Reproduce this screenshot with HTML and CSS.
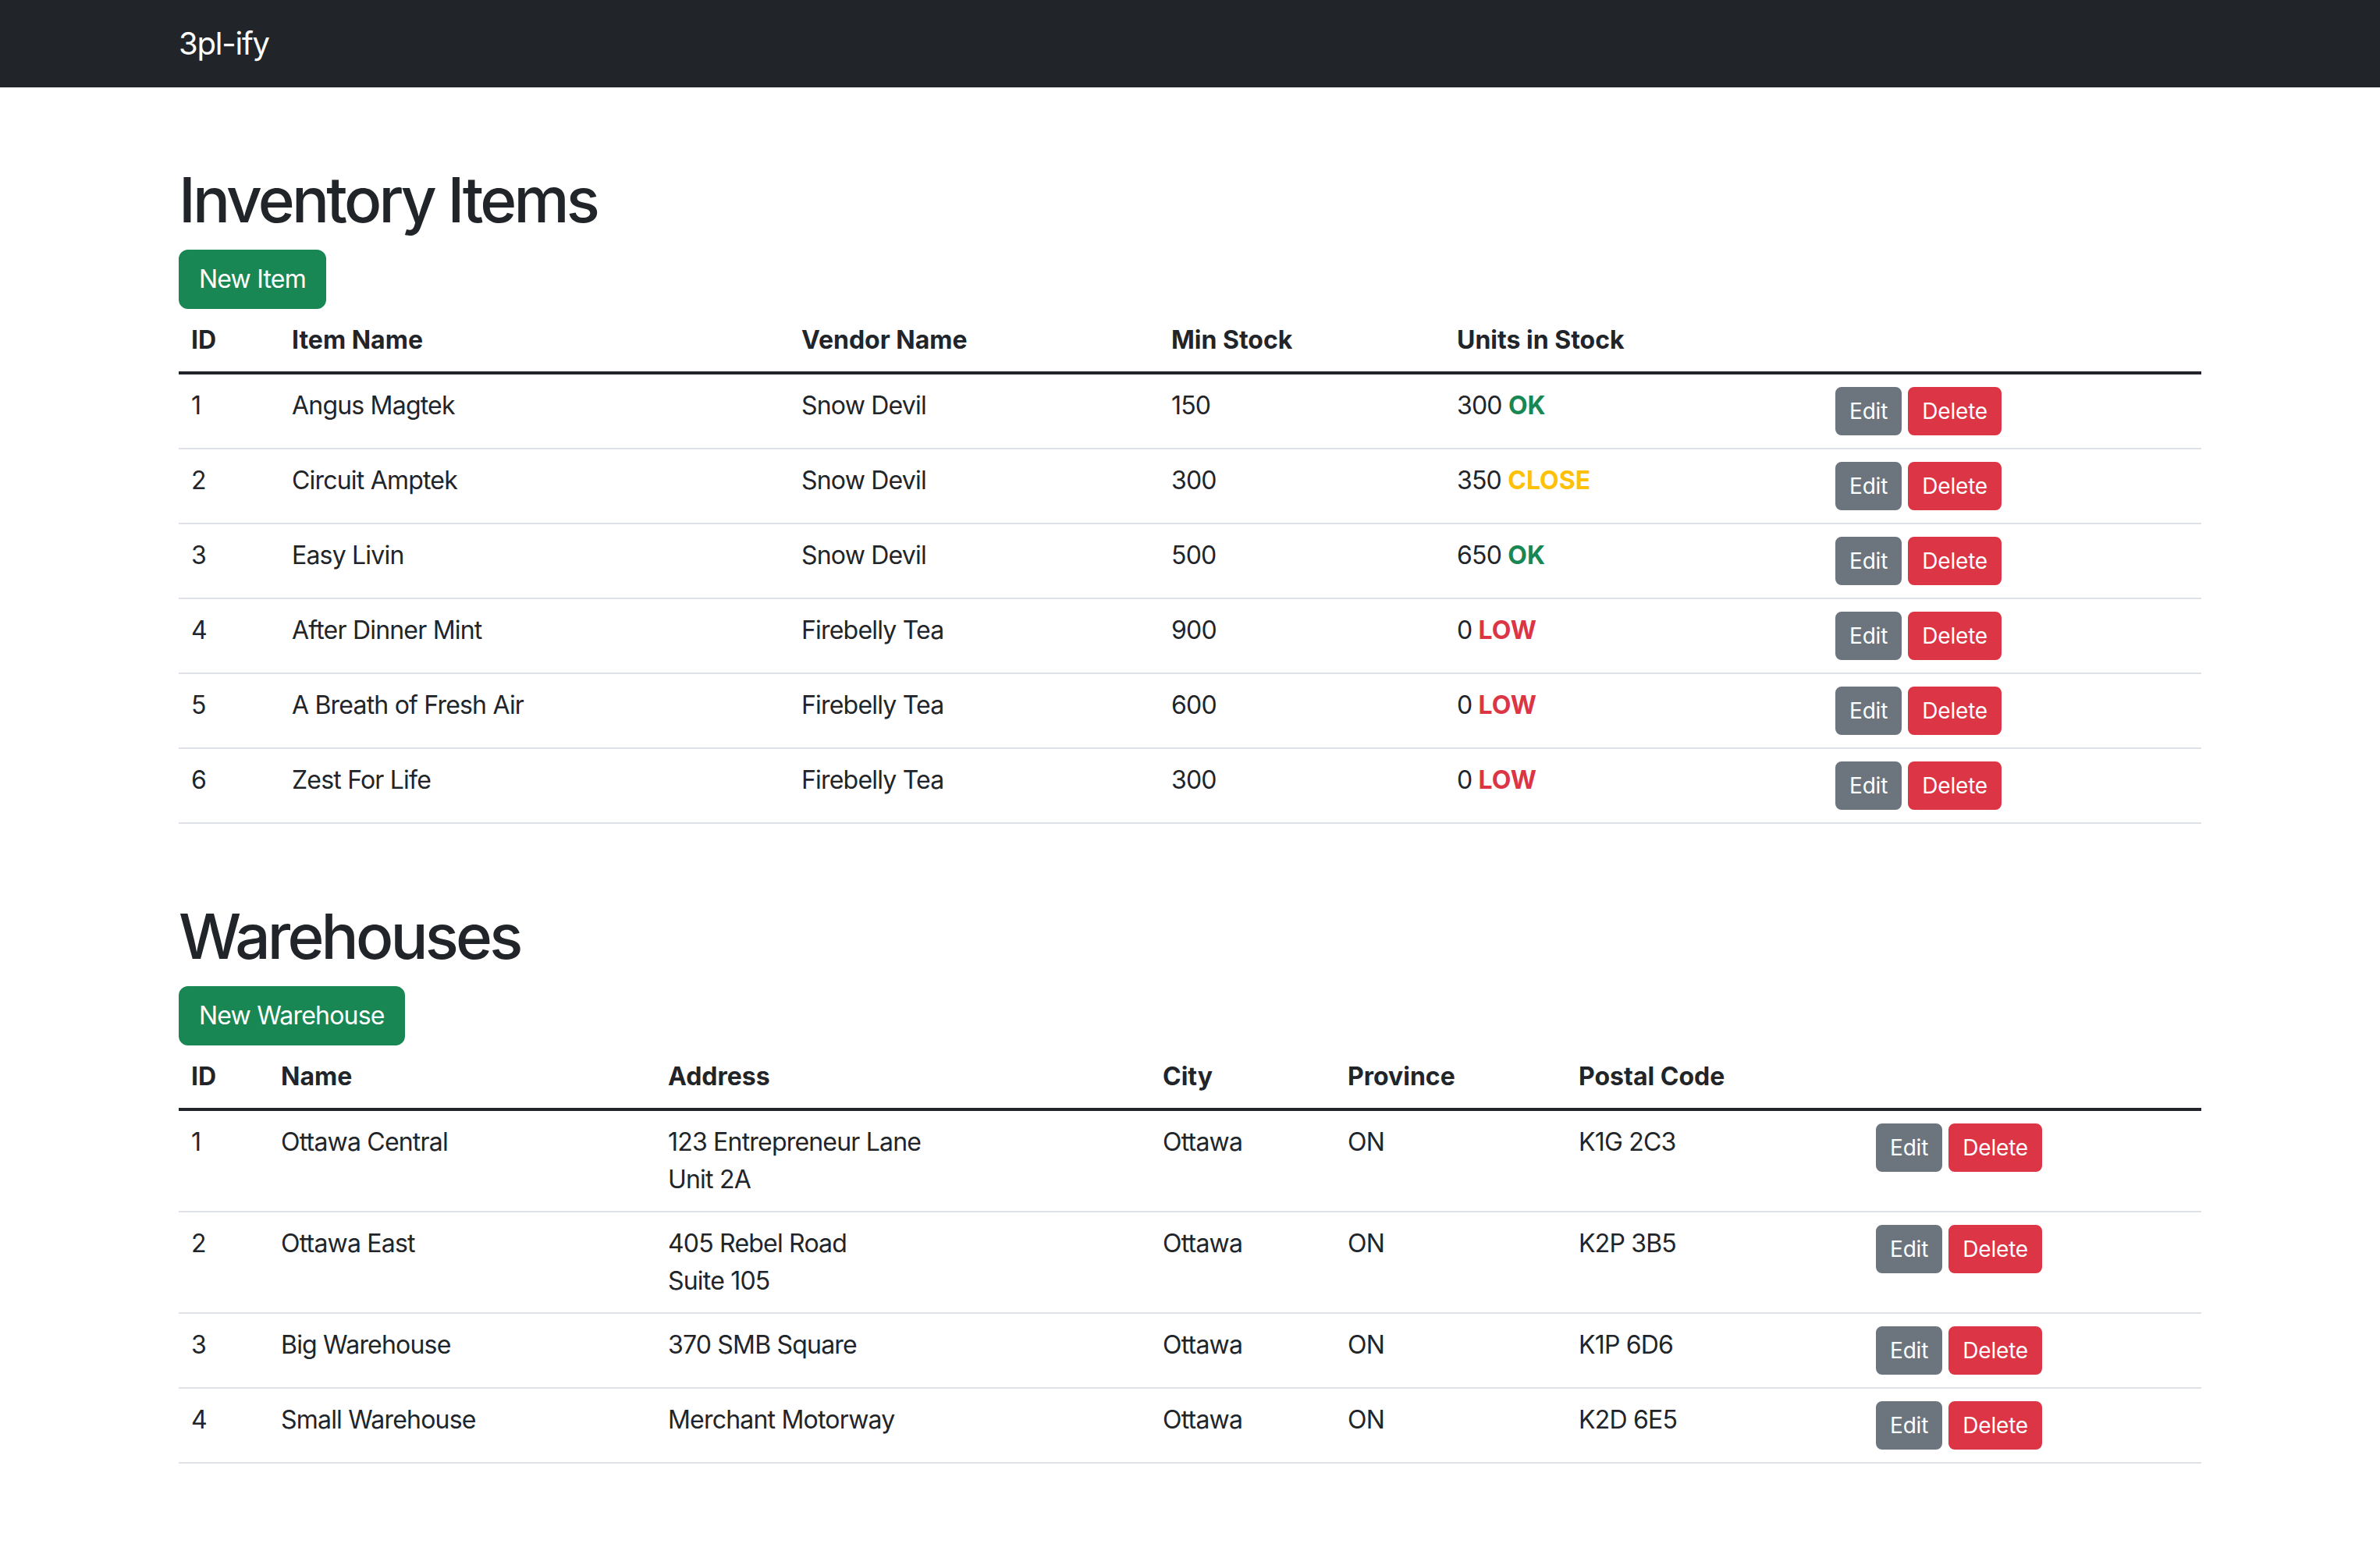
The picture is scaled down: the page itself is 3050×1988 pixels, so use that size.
FILE: index.html
```html
<!DOCTYPE html>
<html lang="en">
<head>
<meta charset="utf-8">
<title>3pl-ify</title>
<link rel="stylesheet" href="styles.css">
</head>
<body>
<nav class="navbar">
  <div class="container">
    <a class="brand" href="#">3pl-ify</a>
  </div>
</nav>
<main class="container">
  <section class="section">
    <h1 class="title">Inventory Items</h1>
    <a class="btn btn-success" href="#">New Item</a>
    <table class="table inv">
      <thead>
        <tr>
          <th class="i-id">ID</th>
          <th class="i-name">Item Name</th>
          <th class="i-vendor">Vendor Name</th>
          <th class="i-min">Min Stock</th>
          <th class="i-units">Units in Stock</th>
          <th class="i-act"></th>
        </tr>
      </thead>
      <tbody>
        <tr><td>1</td><td>Angus Magtek</td><td>Snow Devil</td><td>150</td><td>300 <span class="st ok">OK</span></td><td><a class="btn btn-sm btn-secondary" href="#">Edit</a> <a class="btn btn-sm btn-danger" href="#">Delete</a></td></tr>
        <tr><td>2</td><td>Circuit Amptek</td><td>Snow Devil</td><td>300</td><td>350 <span class="st close">CLOSE</span></td><td><a class="btn btn-sm btn-secondary" href="#">Edit</a> <a class="btn btn-sm btn-danger" href="#">Delete</a></td></tr>
        <tr><td>3</td><td>Easy Livin</td><td>Snow Devil</td><td>500</td><td>650 <span class="st ok">OK</span></td><td><a class="btn btn-sm btn-secondary" href="#">Edit</a> <a class="btn btn-sm btn-danger" href="#">Delete</a></td></tr>
        <tr><td>4</td><td>After Dinner Mint</td><td>Firebelly Tea</td><td>900</td><td>0 <span class="st low">LOW</span></td><td><a class="btn btn-sm btn-secondary" href="#">Edit</a> <a class="btn btn-sm btn-danger" href="#">Delete</a></td></tr>
        <tr><td>5</td><td>A Breath of Fresh Air</td><td>Firebelly Tea</td><td>600</td><td>0 <span class="st low">LOW</span></td><td><a class="btn btn-sm btn-secondary" href="#">Edit</a> <a class="btn btn-sm btn-danger" href="#">Delete</a></td></tr>
        <tr><td>6</td><td>Zest For Life</td><td>Firebelly Tea</td><td>300</td><td>0 <span class="st low">LOW</span></td><td><a class="btn btn-sm btn-secondary" href="#">Edit</a> <a class="btn btn-sm btn-danger" href="#">Delete</a></td></tr>
      </tbody>
    </table>
  </section>
  <section class="section">
    <h1 class="title">Warehouses</h1>
    <a class="btn btn-success" href="#">New Warehouse</a>
    <table class="table wh">
      <thead>
        <tr>
          <th class="w-id">ID</th>
          <th class="w-name">Name</th>
          <th class="w-addr">Address</th>
          <th class="w-city">City</th>
          <th class="w-prov">Province</th>
          <th class="w-postal">Postal Code</th>
          <th class="w-act"></th>
        </tr>
      </thead>
      <tbody>
        <tr><td>1</td><td>Ottawa Central</td><td>123 Entrepreneur Lane<br>Unit 2A</td><td>Ottawa</td><td>ON</td><td>K1G 2C3</td><td><a class="btn btn-sm btn-secondary" href="#">Edit</a> <a class="btn btn-sm btn-danger" href="#">Delete</a></td></tr>
        <tr><td>2</td><td>Ottawa East</td><td>405 Rebel Road<br>Suite 105</td><td>Ottawa</td><td>ON</td><td>K2P 3B5</td><td><a class="btn btn-sm btn-secondary" href="#">Edit</a> <a class="btn btn-sm btn-danger" href="#">Delete</a></td></tr>
        <tr><td>3</td><td>Big Warehouse</td><td>370 SMB Square</td><td>Ottawa</td><td>ON</td><td>K1P 6D6</td><td><a class="btn btn-sm btn-secondary" href="#">Edit</a> <a class="btn btn-sm btn-danger" href="#">Delete</a></td></tr>
        <tr><td>4</td><td>Small Warehouse</td><td>Merchant Motorway</td><td>Ottawa</td><td>ON</td><td>K2D 6E5</td><td><a class="btn btn-sm btn-secondary" href="#">Edit</a> <a class="btn btn-sm btn-danger" href="#">Delete</a></td></tr>
      </tbody>
    </table>
  </section>
</main>
</body>
</html>
```

FILE: styles.css
```css
*, *::before, *::after { box-sizing: border-box; }

html, body {
  margin: 0;
  padding: 0;
  background: #fff;
}

body {
  font-family: Inter, "Noto Sans", "Liberation Sans", sans-serif;
  font-size: 32px;
  line-height: 48px;
  color: #212529;
}

.container {
  max-width: 2640px;
  margin: 0 auto;
  padding: 0 24px;
}

.navbar {
  background: #212529;
  padding: 16px 0;
}

.navbar .container {
  display: flex;
  align-items: center;
}

.brand {
  color: #fff;
  text-decoration: none;
  font-size: 40px;
  line-height: 60px;
  padding: 10px 0;
  letter-spacing: -1.2px;
}

.section {
  margin-top: 96px;
}

.title {
  margin: 0 0 16px;
  font-size: 80px;
  line-height: 96px;
  font-weight: 500;
  letter-spacing: -3.8px;
}

.btn {
  display: inline-block;
  text-decoration: none;
  color: #fff;
  border: 2px solid transparent;
  padding: 12px 24px;
  font-size: 32px;
  line-height: 48px;
  border-radius: 12px;
  vertical-align: middle;
  letter-spacing: -0.8px;
}

.btn-sm {
  padding: 8px 16px;
  font-size: 28px;
  line-height: 42px;
  border-radius: 8px;
  letter-spacing: -0.2px;
}

.btn-success { background: #198754; border-color: #198754; }
.btn-secondary { background: #6c757d; border-color: #6c757d; }
.btn-danger { background: #dc3545; border-color: #dc3545; }

.table {
  width: 100%;
  border-collapse: collapse;
  table-layout: fixed;
  margin-bottom: 32px;
  vertical-align: top;
}

.table th,
.table td {
  padding: 16px;
  text-align: left;
  vertical-align: top;
}

.table th {
  font-weight: 700;
}

.table td {
  border-bottom: 2px solid #dee2e6;
  letter-spacing: -0.8px;
}

.table thead th {
  border-bottom: 4px solid #212529;
}

.st { font-weight: 700; letter-spacing: 0; }
.st.ok { color: #198754; }
.st.close { color: #ffc107; }
.st.low { color: #dc3545; }

.i-id { width: 129px; }
.i-name { width: 653px; }
.i-vendor { width: 474px; }
.i-min { width: 366px; }
.i-units { width: 485px; }

.w-id { width: 115px; }
.w-name { width: 496px; }
.w-addr { width: 634px; }
.w-city { width: 237px; }
.w-prov { width: 296px; }
.w-postal { width: 381px; }
```
